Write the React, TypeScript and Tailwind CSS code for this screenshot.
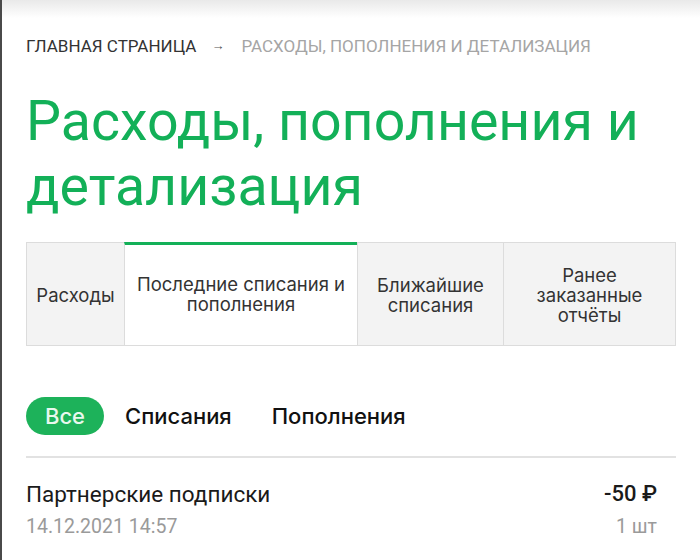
import React from "react";

const tabs = [
  { label: "Расходы", active: false, cls: "w-[97px] px-[4px]" },
  { label: "Последние списания и пополнения", active: true, cls: "w-[233px] px-[4px]" },
  { label: "Ближайшие списания", active: false, cls: "w-[146px] px-[8px]" },
  { label: "Ранее заказанные отчёты", active: false, cls: "flex-1 px-[16px]" },
];

const App = () => {
  return (
    <div className="relative h-[560px] w-[700px] overflow-hidden bg-white border-l-2 border-[#4a4a4a] font-['Roboto',sans-serif]">
      <div className="absolute inset-x-0 top-0 h-[18px] bg-gradient-to-b from-[#e9e9e9] to-white" />
      <div className="relative pl-[24px] pr-[24px] pt-[35px]">
        <div className="flex items-center text-[17px] uppercase leading-[22px]">
          <span className="text-[#333]">Главная страница</span>
          <span className="ml-[15px] mr-[17px] text-[#555] text-[13px]">→</span>
          <span className="text-[#a5a5a5]">Расходы, пополнения и детализация</span>
        </div>

        <h1 className="mt-[32px] text-[55.5px] leading-[65px] text-[#13b058]">
          Расходы, пополнения и детализация
        </h1>

        <div className="mt-[23px] flex h-[104px] border border-[#dcdcdc] font-['Inter',sans-serif] text-[18.5px] leading-[20px] text-[#333]">
          {tabs.map((t, i) => (
            <div
              key={t.label}
              className={`${t.cls} flex items-center justify-center text-center ${
                i > 0 ? "border-l border-[#dcdcdc]" : ""
              } ${
                t.active
                  ? "bg-white border-t-[3px] border-t-[#13b058] -mt-px pb-[2px]"
                  : "bg-[#f3f3f3] pt-[2px]"
              }`}
            >
              {t.label}
            </div>
          ))}
        </div>

        <div className="mt-[51px] flex items-center font-['Inter',sans-serif] text-[22px] font-medium">
          <span className="flex h-[38px] w-[78px] items-center justify-center rounded-full bg-[#1db25a] text-[#e8f8ee]">
            Все
          </span>
          <span className="ml-[21px] text-[#111]">Списания</span>
          <span className="ml-[40px] text-[#111]">Пополнения</span>
        </div>

        <div className="mt-[21px] h-[2px] bg-[#e2e2e2]" />

        <div className="mt-[22px] flex justify-between pr-[19px]">
          <div>
            <div className="text-[22.5px] leading-[28px] text-[#1a1a1a]">Партнерские подписки</div>
            <div className="mt-[7px] text-[19.5px] leading-[24px] text-[#9a9a9a]">14.12.2021 14:57</div>
          </div>
          <div className="text-right">
            <div className="text-[22px] font-medium leading-[28px] text-[#1a1a1a]">-50 ₽</div>
            <div className="mt-[7px] text-[19.5px] leading-[24px] text-[#9a9a9a]">1 шт</div>
          </div>
        </div>
      </div>
    </div>
  );
};

export default App;
